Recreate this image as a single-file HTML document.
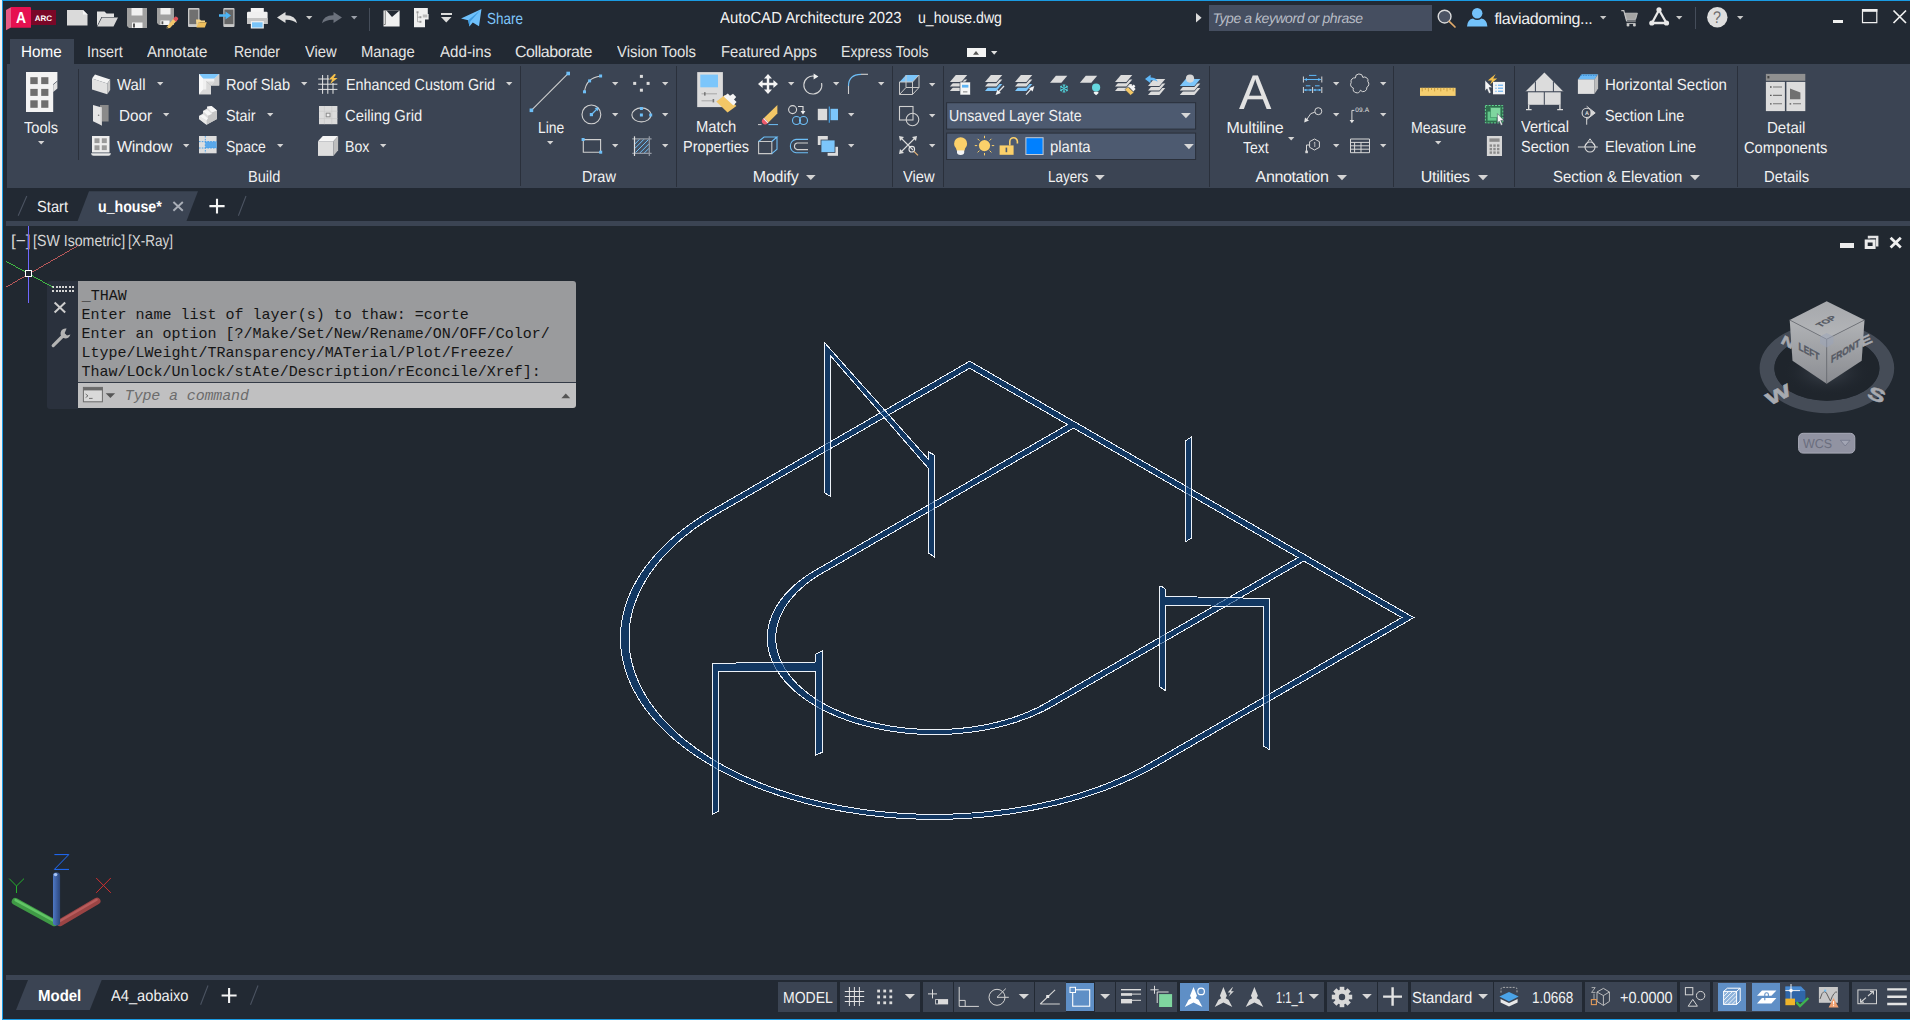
<!DOCTYPE html>
<html><head><meta charset="utf-8">
<style>
*{margin:0;padding:0;box-sizing:border-box}
html,body{width:1910px;height:1020px;overflow:hidden;background:#222933}
body{font-family:"Liberation Sans",sans-serif;color:#f0f0f0;position:relative;font-size:15px}
.a{position:absolute}
.t{position:absolute;white-space:nowrap;line-height:1;display:block}
svg{position:absolute;overflow:visible}
</style></head><body>
<!-- p_frame -->
<div class="a" style="left:0px;top:0px;width:2px;height:1020px;background:#f3f3f3;"></div>
<div class="a" style="left:2px;top:0px;width:1908px;height:1px;background:#1a9be3;"></div>
<div class="a" style="left:2px;top:0px;width:1px;height:1020px;background:#1a9be3;"></div>
<div class="a" style="left:2px;top:1019px;width:1908px;height:1px;background:#1a9be3;"></div>
<div class="a" style="left:7px;top:64px;width:1903px;height:124px;background:#3b4453;"></div>
<div class="a" style="left:10px;top:39px;width:64px;height:26px;background:#3b4453;"></div>
<div class="a" style="left:3px;top:226px;width:1907px;height:749px;background:#212830;"></div>
<div class="a" style="left:6px;top:221px;width:1904px;height:5px;background:#3b4453;"></div>
<div class="a" style="left:6px;top:975px;width:1904px;height:5px;background:#3b4453;"></div>
<!-- p_title -->
<svg style="left:0px;top:0px" width="60" height="36">
<path d="M6 10L11 7.3V27.6L6 30.3Z" fill="#e95a85"/>
<path d="M11 7.1H30Q31 7.1 31 8.1V27.8H11Z" fill="#e61150"/>
<rect x="31" y="10" width="25" height="15" fill="#7a0727"/></svg>
<span class="t" style="left:16.00px;top:11.00px;font-size:16px;color:#ffffff;letter-spacing:0.000px;font-weight:bold;text-rendering:geometricPrecision;transform-origin:0.00px 0;transform:scaleX(0.8696);">A</span>
<span class="t" style="left:34.70px;top:15.00px;font-size:8px;color:#ffffff;letter-spacing:0.062px;font-weight:bold;text-rendering:geometricPrecision;">ARC</span>
<svg style="left:66.5px;top:10.3px" width="21" height="16"><path d="M0 0H16L20.5 4.5V15.5H0Z" fill="#dadada"/><path d="M16 0L20.5 4.5H16Z" fill="#f6f6f6"/></svg>
<svg style="left:96.5px;top:9.5px" width="22" height="17"><path d="M0 1.5H7.5L9.5 3.5H17V7H4.5L0 16Z" fill="#e2e2e2"/><path d="M5 7.6H21L16.5 16.5H0.3Z" fill="#d6d6d6"/></svg>
<svg style="left:127px;top:8px" width="20" height="20"><path d="M0 0H20V20H2L0 18Z" fill="#a0a0a0"/><rect x="4.5" y="0" width="11" height="7.5" fill="#f0f0f0"/><rect x="5" y="14.5" width="10.5" height="5.5" fill="#f4f4f4"/><rect x="6" y="15.5" width="2" height="4" fill="#555"/></svg>
<svg style="left:157px;top:8px" width="21" height="20"><path d="M0 0H17V17H2L0 15Z" fill="#a0a0a0"/><rect x="3.5" y="0" width="10" height="6.5" fill="#f0f0f0"/><rect x="3.5" y="12.5" width="9" height="4.5" fill="#f4f4f4"/><rect x="4.5" y="13.3" width="1.8" height="3" fill="#555"/><path d="M10 18.5L17 10L20 12.5L13 20L9.6 20.6Z" fill="#f3c66b"/><path d="M16 11L18 8.8Q19 8 20 9L21 10Q21.6 11 20.8 11.8L19 13.8Z" fill="#e0535c"/><path d="M10 18.5L9.6 20.6L11.5 20.2Z" fill="#444"/></svg>
<svg style="left:187.6px;top:8px" width="19" height="20"><rect x="0" y="0" width="11.5" height="19" rx="1" fill="#c8c8c8"/><rect x="1.3" y="1.6" width="9" height="14.5" fill="#707070"/><path d="M8 11.5H12L13 12.5H17V14H10.5L8.5 19Z" fill="#f6d58a"/><path d="M10.8 14.3H18.8L16.8 19.5H8.4Z" fill="#efbf5c"/></svg>
<svg style="left:218.8px;top:8px" width="16" height="20"><rect x="4.3" y="0" width="11.2" height="19" rx="1" fill="#c8c8c8"/><rect x="5.4" y="1.6" width="9" height="14.5" fill="#666"/><path d="M0 6.3H6.5V3.5L12 7.5L6.5 11.5V8.7H0Z" fill="#4db5f5"/></svg>
<svg style="left:246.8px;top:7.5px" width="21" height="21"><rect x="3.8" y="0" width="13" height="6" fill="#f4f4f4"/><path d="M0 5Q0 3.8 1.2 3.8H19.4Q20.6 3.8 20.6 5V16H0Z" fill="#f0f0f0"/><rect x="0" y="10" width="20.6" height="6" fill="#c4c4c4"/><rect x="3.8" y="13.2" width="13" height="7.3" fill="#f4f4f4"/><rect x="5" y="14.3" width="10.6" height="5.2" fill="#79c4f8"/></svg>
<svg style="left:277px;top:12px" width="20" height="12"><path d="M0 5.5L8.5 0V3.3Q18.5 3.2 20 11.3Q15.5 7.3 8.5 7.7V11Z" fill="#dcdcdc"/></svg>
<svg style="left:305.8px;top:16px" width="6.4" height="3.6"><path d="M0 0H6.4L3.2 3.6Z" fill="#c8c8c8"/></svg>
<svg style="left:322px;top:12px" width="20" height="12"><path d="M20 5.5L11.5 0V3.3Q1.5 3.2 0 11.3Q4.5 7.3 11.5 7.7V11Z" fill="#6b717c"/></svg>
<svg style="left:350.8px;top:16px" width="6.4" height="3.6"><path d="M0 0H6.4L3.2 3.6Z" fill="#9a9fa8"/></svg>
<div class="a" style="left:369px;top:8px;width:1px;height:23px;background:#454d5a;"></div>
<svg style="left:383px;top:10px" width="17" height="17"><path d="M0.5 0.5H16.6V16.5H0.5Z" fill="#f0f0f0"/><path d="M3.4 0.5L9 7L16.6 0.5Z" fill="#222933"/><path d="M2.3 1V14.5H0.8" stroke="#555" stroke-width="0.7" fill="none"/></svg>
<svg style="left:413.5px;top:8px" width="15" height="19.5"><path d="M0 0H13.8V6H14.6V11.6H11V19.3H0Z" fill="#f0f0f0"/><rect x="2.5" y="3.3" width="2" height="2" fill="#999"/><rect x="5.4" y="8.2" width="2" height="2" fill="#999"/><rect x="5.4" y="12.8" width="2" height="2" fill="#999"/><rect x="8.8" y="6.5" width="4.5" height="3" fill="#bbb"/><path d="M3.5 5.3V13.8H5.4M3.5 9.2H5.4" stroke="#999" stroke-width="0.7" fill="none"/></svg>
<div class="a" style="left:440.5px;top:12.7px;width:11.2px;height:2px;background:#dcdcdc;"></div>
<svg style="left:440.85px;top:16.6px" width="10.5" height="5.4"><path d="M0 0H10.5L5.25 5.4Z" fill="#dcdcdc"/></svg>
<svg style="left:461px;top:8.6px" width="21" height="18"><path d="M0 9.5L20.5 0L18 17.2L11.8 13.6L8.4 17.6L7.2 11.3Z" fill="#6ec0fb"/><path d="M7.2 11.3L19.3 1.2L9.3 12.4L8.4 17.6Z" fill="#3d9be0"/></svg>
<span class="t" style="left:487.30px;top:12.00px;font-size:16px;color:#7fc6fb;letter-spacing:0.000px;text-rendering:geometricPrecision;transform-origin:0.00px 0;transform:scaleX(0.8421);">Share</span>
<span class="t" style="left:720.10px;top:11.00px;font-size:16px;color:#f4f4f4;letter-spacing:0.000px;text-rendering:geometricPrecision;transform-origin:0.00px 0;transform:scaleX(0.9273);">AutoCAD Architecture 2023</span>
<span class="t" style="left:918.30px;top:11.00px;font-size:16px;color:#f4f4f4;letter-spacing:0.000px;text-rendering:geometricPrecision;transform-origin:0.00px 0;transform:scaleX(0.8819);">u_house.dwg</span>
<svg style="left:1195.8px;top:13.4px" width="6" height="10"><path d="M0 0L5.6 4.7L0 9.4Z" fill="#dcdcdc"/></svg>
<div class="a" style="left:1209px;top:5px;width:223px;height:26px;background:#454e60;"></div>
<span class="t" style="left:1212.40px;top:11.00px;font-size:14px;color:#b9bdc6;letter-spacing:-0.438px;font-style:italic;text-rendering:geometricPrecision;">Type a keyword or phrase</span>
<svg style="left:1437px;top:9px" width="20" height="19"><circle cx="7.6" cy="7.6" r="6.4" fill="#4c5464" stroke="#dcdcdc" stroke-width="1.4"/><path d="M12.2 12.4L18 18" stroke="#e0aa6a" stroke-width="1.7" stroke-linecap="round"/></svg>
<svg style="left:1466.7px;top:8.4px" width="21" height="19"><circle cx="10.2" cy="5.2" r="5.2" fill="#73c2fb"/><path d="M0 18.4Q0.5 11.5 6 10.6Q10.2 13.6 14.4 10.6Q19.9 11.5 20.4 18.4Z" fill="#73c2fb"/></svg>
<span class="t" style="left:1494.50px;top:12.00px;font-size:16px;color:#f0f0f0;letter-spacing:-0.352px;text-rendering:geometricPrecision;">flaviadoming...</span>
<svg style="left:1599.8px;top:16px" width="6.4" height="3.6"><path d="M0 0H6.4L3.2 3.6Z" fill="#c8c8c8"/></svg>
<svg style="left:1620.5px;top:10px" width="18" height="17"><path d="M0.3 0.6H2.8L5.6 11H14.8" fill="none" stroke="#c4c4c4" stroke-width="1.2"/><path d="M3.8 3.2H16.4L14.6 9.4H5.4Z" fill="#a4a4a4" stroke="#c8c8c8" stroke-width="0.8"/><path d="M5.6 13.4H14.6" stroke="#c4c4c4" stroke-width="1"/><circle cx="7" cy="15" r="1.5" fill="#c8c8c8"/><circle cx="13.4" cy="15" r="1.5" fill="#c8c8c8"/></svg>
<svg style="left:1648.5px;top:7.3px" width="21" height="19"><path d="M10 3L3 16H17.5Z" fill="none" stroke="#e8e8e8" stroke-width="2.3" stroke-linejoin="round"/><circle cx="10" cy="2.8" r="2.6" fill="#e8e8e8"/><circle cx="2.8" cy="16" r="2.6" fill="#e8e8e8"/><circle cx="17.5" cy="16" r="2.6" fill="#e8e8e8"/></svg>
<svg style="left:1675.8px;top:16px" width="6.4" height="3.6"><path d="M0 0H6.4L3.2 3.6Z" fill="#c8c8c8"/></svg>
<div class="a" style="left:1695px;top:7px;width:1px;height:22px;background:#454d5a;"></div>
<svg style="left:1706.7px;top:7.4px" width="21" height="21"><circle cx="10.3" cy="10.2" r="10.2" fill="#dedede"/></svg>
<span class="t" style="left:1713.00px;top:9.00px;font-size:17px;color:#6e6e6e;letter-spacing:0.000px;text-rendering:geometricPrecision;transform-origin:0.00px 0;transform:scaleX(0.8421);">?</span>
<svg style="left:1736.8px;top:16px" width="6.4" height="3.6"><path d="M0 0H6.4L3.2 3.6Z" fill="#c8c8c8"/></svg>
<div class="a" style="left:1832.7px;top:19.7px;width:10.6px;height:3.4px;background:#f0f0f0;"></div>
<svg style="left:1862px;top:9px" width="15" height="14.2"><path d="M0.5 0.5H14.8V13.7H0.5Z" fill="none" stroke="#f0f0f0" stroke-width="1.2"/><rect x="0" y="0" width="15.3" height="2.8" fill="#f0f0f0"/></svg>
<svg style="left:1892.7px;top:9.8px" width="14" height="14"><path d="M0.5 0.5L13 13M13 0.5L0.5 13" stroke="#f0f0f0" stroke-width="1.7"/></svg>
<!-- p_menu -->
<span class="t" style="left:21.40px;top:45.00px;font-size:16px;color:#ffffff;letter-spacing:0.000px;text-rendering:geometricPrecision;transform-origin:0.00px 0;transform:scaleX(0.9525);">Home</span>
<span class="t" style="left:87.40px;top:45.00px;font-size:16px;color:#e4e4e4;letter-spacing:0.000px;text-rendering:geometricPrecision;transform-origin:0.00px 0;transform:scaleX(0.8925);">Insert</span>
<span class="t" style="left:147.40px;top:45.00px;font-size:16px;color:#e4e4e4;letter-spacing:0.000px;text-rendering:geometricPrecision;transform-origin:0.00px 0;transform:scaleX(0.9422);">Annotate</span>
<span class="t" style="left:233.70px;top:45.00px;font-size:16px;color:#e4e4e4;letter-spacing:0.000px;text-rendering:geometricPrecision;transform-origin:0.00px 0;transform:scaleX(0.8762);">Render</span>
<span class="t" style="left:305.00px;top:45.00px;font-size:16px;color:#e4e4e4;letter-spacing:0.000px;text-rendering:geometricPrecision;transform-origin:0.00px 0;transform:scaleX(0.9217);">View</span>
<span class="t" style="left:361.30px;top:45.00px;font-size:16px;color:#e4e4e4;letter-spacing:0.000px;text-rendering:geometricPrecision;transform-origin:0.00px 0;transform:scaleX(0.9279);">Manage</span>
<span class="t" style="left:439.70px;top:45.00px;font-size:16px;color:#e4e4e4;letter-spacing:0.000px;text-rendering:geometricPrecision;transform-origin:0.00px 0;transform:scaleX(0.9456);">Add-ins</span>
<span class="t" style="left:515.00px;top:45.00px;font-size:16px;color:#e4e4e4;letter-spacing:-0.438px;text-rendering:geometricPrecision;">Collaborate</span>
<span class="t" style="left:617.00px;top:45.00px;font-size:16px;color:#e4e4e4;letter-spacing:0.000px;text-rendering:geometricPrecision;transform-origin:0.00px 0;transform:scaleX(0.9322);">Vision Tools</span>
<span class="t" style="left:721.00px;top:45.00px;font-size:16px;color:#e4e4e4;letter-spacing:0.000px;text-rendering:geometricPrecision;transform-origin:0.00px 0;transform:scaleX(0.9220);">Featured Apps</span>
<span class="t" style="left:841.40px;top:45.00px;font-size:16px;color:#e4e4e4;letter-spacing:0.000px;text-rendering:geometricPrecision;transform-origin:0.00px 0;transform:scaleX(0.8826);">Express Tools</span>
<div class="a" style="left:967px;top:48px;width:19px;height:9px;background:#f4f4f4;"></div>
<svg style="left:973.4px;top:50.8px" width="6" height="3.8"><path d="M0 3.8L3 0L6 3.8Z" fill="#555"/></svg>
<svg style="left:990.8px;top:51.1px" width="6.4" height="3.7"><path d="M0 0H6.4L3.2 3.7Z" fill="#e0e0e0"/></svg>
<!-- p_ribbon1 -->
<svg style="left:25.9px;top:72px" width="32" height="40"><path d="M0 0H31.4V9L27.2 12.5V40H0Z" fill="#f3f3f3"/>
<path d="M27.2 12.5L31.4 9V16.5L27.2 20Z" fill="#e0e0e0"/><path d="M27.2 12.5L31.4 9" stroke="#3b4453" stroke-width="0.6"/>
<g fill="#6e6e6e"><rect x="4.3" y="5.2" width="7.4" height="6.9"/><rect x="15.2" y="5.2" width="7.2" height="6.9"/><rect x="4.3" y="16.9" width="7.4" height="7"/><rect x="15.2" y="16.9" width="7.2" height="7"/><rect x="4.3" y="28.3" width="7.4" height="7.5"/><rect x="15.2" y="28.3" width="7.2" height="7.5"/></g></svg>
<span class="t" style="left:24.40px;top:121.00px;font-size:16px;color:#f2f2f2;letter-spacing:0.000px;text-rendering:geometricPrecision;transform-origin:0.00px 0;transform:scaleX(0.9124);">Tools</span>
<svg style="left:38.2px;top:141.4px" width="6.4" height="3.6"><path d="M0 0H6.4L3.2 3.6Z" fill="#d4d4d4"/></svg>
<div class="a" style="left:78px;top:69px;width:1px;height:91px;background:#2a303b;"></div>
<svg style="left:91.8px;top:74px" width="19" height="21"><path d="M0 4.5L3 0.6L18.2 5.5L15.2 9.4Z" fill="#f4f4f4"/><path d="M0 4.5L15.2 9.4V20.2L0 15.5Z" fill="#e2e2e2"/><path d="M15.2 9.4L18.2 5.5V16L15.2 20.2Z" fill="#c9c9c9"/></svg>
<span class="t" style="left:117.00px;top:78.00px;font-size:16px;color:#f2f2f2;letter-spacing:0.000px;text-rendering:geometricPrecision;transform-origin:0.00px 0;transform:scaleX(0.9344);">Wall</span>
<svg style="left:157px;top:82.1px" width="6.4" height="3.6"><path d="M0 0H6.4L3.2 3.6Z" fill="#d4d4d4"/></svg>
<svg style="left:92.9px;top:104.8px" width="16" height="21"><rect x="7" y="0" width="8.6" height="16.5" fill="#8a8a8a"/><path d="M0 0L8.8 2.6V20.4L0 16.3Z" fill="#e6e6e6"/><path d="M7.6 2.3L8.8 2.6V20.4L7.6 19.9Z" fill="#cfcfcf"/><circle cx="5.6" cy="10.3" r="0.8" fill="#777"/></svg>
<span class="t" style="left:118.80px;top:109.00px;font-size:16px;color:#f2f2f2;letter-spacing:0.000px;text-rendering:geometricPrecision;transform-origin:0.00px 0;transform:scaleX(0.9531);">Door</span>
<svg style="left:163px;top:113.3px" width="6.4" height="3.6"><path d="M0 0H6.4L3.2 3.6Z" fill="#d4d4d4"/></svg>
<svg style="left:91px;top:136.1px" width="20" height="20"><rect x="1" y="0" width="17.5" height="16.5" fill="#ededed"/><g fill="#9a9a9a"><rect x="3.5" y="2.3" width="5" height="4.8"/><rect x="10.8" y="2.3" width="5" height="4.8"/><rect x="3.5" y="9.3" width="5" height="4.8"/><rect x="10.8" y="9.3" width="5" height="4.8"/></g><path d="M0 17.2H20Q19.6 19.8 17.5 19.8H2.5Q0.4 19.8 0 17.2Z" fill="#e8e8e8"/></svg>
<span class="t" style="left:117.00px;top:140.00px;font-size:16px;color:#f2f2f2;letter-spacing:-0.320px;text-rendering:geometricPrecision;">Window</span>
<svg style="left:183px;top:144.3px" width="6.4" height="3.6"><path d="M0 0H6.4L3.2 3.6Z" fill="#d4d4d4"/></svg>
<svg style="left:198.8px;top:74px" width="21" height="21"><path d="M0 0H20.2V11.5H12V20.2H0Z" fill="#ececec"/><path d="M0 0H20.2L15.3 4.8H4.2Z" fill="#7cc6fb"/><path d="M0 0L4.2 4.8V15.6L0 20.2Z" fill="#f8f8f8"/><path d="M4.2 4.8H15.3V7.4H7.3V15.6H4.2Z" fill="#f0f0f0"/><path d="M15.3 4.8L20.2 0V11.5H12L15.3 7.4Z" fill="#cfcfcf"/><path d="M7.3 7.4H15.3L12 11.5V20.2H0L4.2 15.6H7.3Z" fill="#d9d9d9"/><path d="M7.3 7.4L12 11.5" stroke="#bdbdbd" stroke-width="0.6"/></svg>
<span class="t" style="left:225.80px;top:78.00px;font-size:16px;color:#f2f2f2;letter-spacing:0.000px;text-rendering:geometricPrecision;transform-origin:0.00px 0;transform:scaleX(0.9110);">Roof Slab</span>
<svg style="left:301px;top:82.1px" width="6.4" height="3.6"><path d="M0 0H6.4L3.2 3.6Z" fill="#d4d4d4"/></svg>
<svg style="left:199px;top:106.3px" width="19" height="19"><path d="M0 10L4 7.5V5L8 2.5V0.6L12.5 0L18 4.6V13L7.5 18.8L0 13Z" fill="#dcdcdc"/><path d="M8 0.9L12.5 0L18 4.6L13 6.5Z" fill="#f6f6f6"/><path d="M4 5L8.5 4L13 8L9 9.7Z" fill="#f6f6f6"/><path d="M0 10L4.5 8.4L9 12.5L7.5 14.5Z" fill="#f6f6f6"/><path d="M7.5 14.5L9 12.5V9.7L13 8V6.5L18 4.6V13L7.5 18.8Z" fill="#c6c6c6"/><path d="M0 10L7.5 14.5V18.8L0 13Z" fill="#e8e8e8"/></svg>
<span class="t" style="left:226.30px;top:109.00px;font-size:16px;color:#f2f2f2;letter-spacing:0.000px;text-rendering:geometricPrecision;transform-origin:0.00px 0;transform:scaleX(0.9004);">Stair</span>
<svg style="left:267.1px;top:113.3px" width="6.4" height="3.6"><path d="M0 0H6.4L3.2 3.6Z" fill="#d4d4d4"/></svg>
<svg style="left:199px;top:136.1px" width="18" height="18"><rect x="0" y="0" width="17.6" height="17.3" fill="#dedede"/><rect x="6.3" y="5.6" width="11.3" height="6.4" fill="#5aa8ea"/><path d="M6.3 0V17.3M0 5.6H17.6M0 12H17.6" stroke="#3d9bea" stroke-width="0.9" stroke-dasharray="1.6 1.2" fill="none"/></svg>
<span class="t" style="left:226.30px;top:140.00px;font-size:16px;color:#f2f2f2;letter-spacing:0.000px;text-rendering:geometricPrecision;transform-origin:0.00px 0;transform:scaleX(0.8771);">Space</span>
<svg style="left:276.9px;top:144.3px" width="6.4" height="3.6"><path d="M0 0H6.4L3.2 3.6Z" fill="#d4d4d4"/></svg>
<svg style="left:317.9px;top:74.3px" width="20" height="20"><path d="M4.6 1V19.8M9.8 1V19.8M15 9V19.8M0.2 5H11M0.2 10.2H19.4M0.2 15.4H19.4" stroke="#e6e6e6" stroke-width="1" fill="none"/><path d="M16.2 0L10.8 5.6H14.2L12.2 10L19.6 4H15.6L18 0.6Z" fill="#f5c04a"/></svg>
<span class="t" style="left:345.70px;top:78.00px;font-size:16px;color:#f2f2f2;letter-spacing:0.000px;text-rendering:geometricPrecision;transform-origin:0.00px 0;transform:scaleX(0.8962);">Enhanced Custom Grid</span>
<svg style="left:506px;top:82.1px" width="6.4" height="3.6"><path d="M0 0H6.4L3.2 3.6Z" fill="#d4d4d4"/></svg>
<svg style="left:318.9px;top:105.8px" width="19" height="19"><rect x="0" y="0" width="18.4" height="18.2" fill="#dcdcdc"/><path d="M5.4 0V18.2M12.8 0V18.2M0 5.2H18.4M0 12.6H18.4" stroke="#cacaca" stroke-width="0.7"/><rect x="7.2" y="7.2" width="3.8" height="3.6" fill="#eee" stroke="#8c8c8c" stroke-width="1"/></svg>
<span class="t" style="left:345.40px;top:109.00px;font-size:16px;color:#f2f2f2;letter-spacing:0.000px;text-rendering:geometricPrecision;transform-origin:0.00px 0;transform:scaleX(0.9232);">Ceiling Grid</span>
<svg style="left:317.9px;top:136.1px" width="21" height="21"><path d="M0 5.2L4.8 0H20.1L15.4 5.2Z" fill="#f6f6f6"/><path d="M0 5.2H15.4V19.9H0Z" fill="#dedede"/><path d="M15.4 5.2L20.1 0V14.3L15.4 19.9Z" fill="#bebebe"/></svg>
<span class="t" style="left:344.70px;top:140.00px;font-size:16px;color:#f2f2f2;letter-spacing:0.000px;text-rendering:geometricPrecision;transform-origin:0.00px 0;transform:scaleX(0.8833);">Box</span>
<svg style="left:380.3px;top:144.3px" width="6.4" height="3.6"><path d="M0 0H6.4L3.2 3.6Z" fill="#d4d4d4"/></svg>
<span class="t" style="left:247.50px;top:170.00px;font-size:16px;color:#f2f2f2;letter-spacing:0.000px;text-rendering:geometricPrecision;transform-origin:0.00px 0;transform:scaleX(0.9123);">Build</span>
<div class="a" style="left:520px;top:66px;width:1px;height:120px;background:#2a303b;"></div>
<!-- p_ribbon2 -->
<svg style="left:0px;top:0px" width="1910" height="200"><path d="M531.6 110.2L568 73.7" stroke="#d0d0d0" stroke-width="1.1"/><rect x="529.6" y="108.5" width="3.6" height="3.6" fill="#6ebff7"/><rect x="566.4" y="71.7" width="3.6" height="3.6" fill="#6ebff7"/><path d="M584.5 91.8Q586 78 600.6 76" stroke="#d0d0d0" stroke-width="1.1" fill="none"/><rect x="583" y="90.3" width="3" height="3" fill="#6ebff7"/><rect x="588.1" y="79.4" width="3" height="3" fill="#6ebff7"/><rect x="599.1" y="74.5" width="3" height="3" fill="#6ebff7"/><rect x="639.9" y="74.9" width="3" height="3" fill="#dcdcdc"/><rect x="633.2" y="81.9" width="3" height="3" fill="#dcdcdc"/><rect x="646.6" y="81.9" width="3" height="3" fill="#dcdcdc"/><rect x="639.9" y="88.7" width="3" height="3" fill="#dcdcdc"/><circle cx="591.4" cy="114.4" r="9.4" fill="none" stroke="#d0d0d0" stroke-width="1.1"/><rect x="589.8" y="113" width="3.2" height="3.2" fill="#6ebff7"/><path d="M592.5 113.5L597.5 108.5" stroke="#6ebff7" stroke-width="1.2"/><path d="M594.6 108L598.4 107.4L597.8 111.2Z" fill="#6ebff7"/><ellipse cx="641.4" cy="114.9" rx="9.5" ry="7" fill="none" stroke="#d0d0d0" stroke-width="1.1"/><rect x="639.9" y="107" width="3" height="3" fill="#6ebff7"/><rect x="639.9" y="113.5" width="3" height="3" fill="#6ebff7"/><rect x="649.2" y="113.5" width="3" height="3" fill="#6ebff7"/><path d="M583.3 139.6H600.6V152.2H583.3Z" fill="none" stroke="#d0d0d0" stroke-width="1.1"/><rect x="581.6" y="138" width="3" height="3" fill="#6ebff7"/><rect x="599.2" y="150.7" width="3" height="3" fill="#6ebff7"/><rect x="634.8" y="139.2" width="14.3" height="13.8" fill="#465060"/><path d="M634.8 144L639.6 139.2M634.8 148.5L644 139.2M635.5 152.5L648.6 139.4M639.8 153L649.1 143.7M644.3 153L649.1 148.2" stroke="#6ebff7" stroke-width="1"/><path d="M649.3 136.3V156M632.2 138.8H651.6M632.2 153.3H651.6" stroke="#9399a3" stroke-width="1.2"/><path d="M634.5 136.3V156" stroke="#e0e0e0" stroke-width="1.2"/></svg>
<span class="t" style="left:537.70px;top:121.00px;font-size:16px;color:#f2f2f2;letter-spacing:0.000px;text-rendering:geometricPrecision;transform-origin:0.00px 0;transform:scaleX(0.8661);">Line</span>
<svg style="left:547.2px;top:141.3px" width="6.4" height="3.6"><path d="M0 0H6.4L3.2 3.6Z" fill="#d4d4d4"/></svg>
<svg style="left:612px;top:82.2px" width="6.4" height="3.6"><path d="M0 0H6.4L3.2 3.6Z" fill="#d4d4d4"/></svg>
<svg style="left:612px;top:113px" width="6.4" height="3.6"><path d="M0 0H6.4L3.2 3.6Z" fill="#d4d4d4"/></svg>
<svg style="left:612px;top:144.3px" width="6.4" height="3.6"><path d="M0 0H6.4L3.2 3.6Z" fill="#d4d4d4"/></svg>
<svg style="left:661.8px;top:82.2px" width="6.4" height="3.6"><path d="M0 0H6.4L3.2 3.6Z" fill="#d4d4d4"/></svg>
<svg style="left:661.8px;top:113px" width="6.4" height="3.6"><path d="M0 0H6.4L3.2 3.6Z" fill="#d4d4d4"/></svg>
<svg style="left:661.8px;top:144.3px" width="6.4" height="3.6"><path d="M0 0H6.4L3.2 3.6Z" fill="#d4d4d4"/></svg>
<span class="t" style="left:581.80px;top:170.00px;font-size:16px;color:#f2f2f2;letter-spacing:0.000px;text-rendering:geometricPrecision;transform-origin:0.00px 0;transform:scaleX(0.9070);">Draw</span>
<div class="a" style="left:676px;top:66px;width:1px;height:121px;background:#2a303b;"></div>
<svg style="left:0px;top:0px" width="1910" height="200"><rect x="697.2" y="72.1" width="25.7" height="35" fill="#dcdcdc"/><rect x="700.3" y="74.6" width="17.7" height="12.7" fill="#7cc6fb"/><path d="M701.5 93.8H717M701.5 100.8H714" stroke="#9a9a9a" stroke-width="0.8"/><rect x="704" y="92.2" width="1.6" height="3.4" fill="#777"/><rect x="712.6" y="99" width="1.6" height="3.4" fill="#777"/><path d="M716.3 101.4L725 95L736.4 106L727.5 112.4Z" fill="#f3c766"/><path d="M723.6 96.6L727.8 93.6L730 95.8L733 93.8L736.2 97L734 99.4L736.6 102L733.4 105.6Z" fill="#f4f4f4"/><path d="M768 73.9L772 78.6H769.2V82.8H773.4V80L778 84L773.4 88V85.2H769.2V89.4H772L768 94L764 89.4H766.8V85.2H762.6V88L758 84L762.6 80V82.8H766.8V78.6H764Z" fill="#f4f4f4"/><path d="M814.5 76.2A9 9 0 1 0 821.6 83" fill="none" stroke="#d6d6d6" stroke-width="1.1"/><path d="M813.6 73.6L818.4 76.6L813.6 79.4Z" fill="#f0f0f0"/><path d="M848.5 94V86" stroke="#d0d0d0" stroke-width="1.1" fill="none"/><path d="M848.5 86Q848.5 74.5 861 74.3" stroke="#6ebff7" stroke-width="1.2" fill="none"/><path d="M861 74.3H868" stroke="#d0d0d0" stroke-width="1.1"/><path d="M764 118L777.4 105V113.5L768.4 122.4Z" fill="#f3c766"/><path d="M764 118L768.4 122.4L766.8 124Q764.6 125.4 762.8 123.6Q761.2 121.6 762.4 119.6Z" fill="#ef5a6a"/><path d="M763.2 118.8L767.6 123.2L768.4 122.4L764 118Z" fill="#f4f4f4"/><path d="M758 124.6H761.5" stroke="#d0d0d0" stroke-width="1"/><path d="M768.5 124.6H778" stroke="#6ebff7" stroke-width="1"/><circle cx="792.6" cy="109.6" r="4" fill="none" stroke="#d6d6d6" stroke-width="1.1"/><path d="M798 106.5H803V112" stroke="#e0e0e0" stroke-width="1.1" fill="none"/><path d="M800.6 111L803 114.4L805.4 111Z" fill="#f0f0f0"/><circle cx="796.5" cy="120.5" r="4" fill="none" stroke="#6ebff7" stroke-width="1.1"/><circle cx="803.5" cy="120.5" r="4" fill="none" stroke="#6ebff7" stroke-width="1.1"/><rect x="817.8" y="108.8" width="9.4" height="11.4" fill="#dcdcdc"/><rect x="830.5" y="108.8" width="7.5" height="11.4" fill="#7cc6fb"/><path d="M829.3 106.4V122.7" stroke="#4aa8ee" stroke-width="1.1"/><path d="M758.6 141.5H771.8V153.6H758.6Z" fill="none" stroke="#c8c8c8" stroke-width="1.1"/><path d="M758.6 141.5L764 137H777L771.8 141.5M777 137V149.2L771.8 153.6" fill="none" stroke="#6ebff7" stroke-width="1.1"/><path d="M808 139.4H796A6.8 6.8 0 0 0 796 152.8H808" fill="none" stroke="#6ebff7" stroke-width="1.1"/><path d="M808 143H797A3.4 3.4 0 0 0 797 149.6H808" fill="none" stroke="#d0d0d0" stroke-width="1.1"/><rect x="817.8" y="136" width="10" height="9" fill="#dcdcdc"/><rect x="827.6" y="146.8" width="10.4" height="9" fill="#dcdcdc"/><rect x="821" y="140" width="14" height="12.5" fill="#7cc6fb" stroke="#3b4453" stroke-width="0.8"/></svg>
<span class="t" style="left:695.80px;top:120.00px;font-size:16px;color:#f2f2f2;letter-spacing:0.000px;text-rendering:geometricPrecision;transform-origin:0.00px 0;transform:scaleX(0.9215);">Match</span>
<span class="t" style="left:682.80px;top:140.00px;font-size:16px;color:#f2f2f2;letter-spacing:0.000px;text-rendering:geometricPrecision;transform-origin:0.00px 0;transform:scaleX(0.9057);">Properties</span>
<svg style="left:788px;top:82px" width="6.4" height="3.6"><path d="M0 0H6.4L3.2 3.6Z" fill="#d4d4d4"/></svg>
<svg style="left:832.9px;top:82px" width="6.4" height="3.6"><path d="M0 0H6.4L3.2 3.6Z" fill="#d4d4d4"/></svg>
<svg style="left:877.9px;top:82px" width="6.4" height="3.6"><path d="M0 0H6.4L3.2 3.6Z" fill="#d4d4d4"/></svg>
<svg style="left:848px;top:113px" width="6.4" height="3.6"><path d="M0 0H6.4L3.2 3.6Z" fill="#d4d4d4"/></svg>
<svg style="left:848px;top:144.2px" width="6.4" height="3.6"><path d="M0 0H6.4L3.2 3.6Z" fill="#d4d4d4"/></svg>
<span class="t" style="left:752.80px;top:170.00px;font-size:16px;color:#f2f2f2;letter-spacing:-0.245px;text-rendering:geometricPrecision;">Modify</span>
<svg style="left:806.4px;top:175.4px" width="9.6" height="5"><path d="M0 0H9.6L4.8 5Z" fill="#d4d4d4"/></svg>
<div class="a" style="left:892px;top:66px;width:1px;height:121px;background:#2a303b;"></div>
<svg style="left:0px;top:0px" width="1910" height="200"><path d="M899.5 82L906 75H919L912.5 82Z" fill="#7cc6fb"/><path d="M899.5 82H912.5V94.5H899.5ZM912.5 82L919 75V87.5L912.5 94.5M899.5 94.5L906 87.5H919M906 75V87.5" fill="none" stroke="#c8c8c8" stroke-width="1"/><rect x="899.5" y="106.5" width="13.5" height="13.5" fill="none" stroke="#d0d0d0" stroke-width="1.1"/><circle cx="912.5" cy="119.5" r="6.3" fill="none" stroke="#d0d0d0" stroke-width="1.1"/><path d="M900.5 137.5L913 150M915.5 137.5L900.5 152.5" stroke="#dcdcdc" stroke-width="1.1"/><path d="M899 136L904 137L900 141Z M917 136L912 137L916 141Z M899 154L900 149L904 153Z" fill="#dcdcdc"/><circle cx="911.8" cy="149.2" r="2.8" fill="none" stroke="#e4e4e4" stroke-width="1.1"/><path d="M914 151.4L918 155.4" stroke="#e8b678" stroke-width="1.3"/></svg>
<svg style="left:929px;top:83px" width="6.4" height="3.6"><path d="M0 0H6.4L3.2 3.6Z" fill="#d4d4d4"/></svg>
<svg style="left:929px;top:113.9px" width="6.4" height="3.6"><path d="M0 0H6.4L3.2 3.6Z" fill="#d4d4d4"/></svg>
<svg style="left:929px;top:144.2px" width="6.4" height="3.6"><path d="M0 0H6.4L3.2 3.6Z" fill="#d4d4d4"/></svg>
<span class="t" style="left:902.60px;top:170.00px;font-size:16px;color:#f2f2f2;letter-spacing:0.000px;text-rendering:geometricPrecision;transform-origin:0.00px 0;transform:scaleX(0.9188);">View</span>
<div class="a" style="left:943px;top:66px;width:1px;height:121px;background:#2a303b;"></div>
<!-- p_ribbon3 -->
<svg style="left:0px;top:0px" width="1910" height="200"><path d="M949.9 91L955.8 84H967.2L961.3 91Z" fill="#dcdcdc"/><path d="M949.9 87.7L955.8 80.7H967.2L961.3 87.7Z" fill="#3b4453"/><path d="M949.9 86.5L955.8 79.5H967.2L961.3 86.5Z" fill="#dcdcdc"/><path d="M949.9 83.2L955.8 76.2H967.2L961.3 83.2Z" fill="#3b4453"/><path d="M949.9 82L955.8 75H967.2L961.3 82Z" fill="#dcdcdc"/><rect x="960" y="82" width="10.4" height="13" fill="#f6f6f6" stroke="#3b4453" stroke-width="0.6"/><rect x="962" y="84.8" width="6.4" height="2.8" fill="#5fb4f4"/><rect x="963" y="91" width="4.4" height="1.6" fill="#aaa"/><path d="M985 91L990.9 84H1002.3L996.4 91Z" fill="#7cc6fb"/><path d="M985 87.7L990.9 80.7H1002.3L996.4 87.7Z" fill="#3b4453"/><path d="M985 86.5L990.9 79.5H1002.3L996.4 86.5Z" fill="#dcdcdc"/><path d="M985 83.2L990.9 76.2H1002.3L996.4 83.2Z" fill="#3b4453"/><path d="M985 82L990.9 75H1002.3L996.4 82Z" fill="#dcdcdc"/><path d="M1004 86L997 93.5" stroke="#e8e8e8" stroke-width="1.2"/><path d="M995.6 95L997.4 89.8L1000.8 93Z" fill="#f4f4f4"/><path d="M1015 91L1020.9 84H1032.3L1026.4 91Z" fill="#7cc6fb"/><path d="M1015 87.7L1020.9 80.7H1032.3L1026.4 87.7Z" fill="#3b4453"/><path d="M1015 86.5L1020.9 79.5H1032.3L1026.4 86.5Z" fill="#dcdcdc"/><path d="M1015 83.2L1020.9 76.2H1032.3L1026.4 83.2Z" fill="#3b4453"/><path d="M1015 82L1020.9 75H1032.3L1026.4 82Z" fill="#dcdcdc"/><path d="M1026 94.6L1032 88" stroke="#e8e8e8" stroke-width="1.2"/><path d="M1034.3 86L1032.6 91.6L1029 88.2Z" fill="#f4f4f4"/><path d="M1050 82.8L1055.9 75.8H1067.3L1061.4 82.8Z" fill="#dcdcdc"/><g stroke="#4fd0d8" stroke-width="1" fill="none"><path d="M1064 84V93M1060.1 86.2L1067.9 90.8M1060.1 90.8L1067.9 86.2"/><path d="M1062.6 85L1064 86.2L1065.4 85M1062.6 92L1064 90.8L1065.4 92M1060.2 88L1061.8 87.2L1061.4 85.6M1066.6 85.6L1066.2 87.2L1067.8 88M1060.2 89L1061.8 89.8L1061.4 91.4M1066.6 91.4L1066.2 89.8L1067.8 89"/></g><path d="M1079.9 82.8L1085.8 75.8H1097.2L1091.3 82.8Z" fill="#dcdcdc"/><circle cx="1096.1" cy="87.6" r="4.1" fill="#66d8e0"/><path d="M1093.8 91.8H1098.4V93.2L1096.1 95.2L1093.8 93.2Z" fill="#f4f4f4"/><path d="M1115 91L1120.9 84H1132.3L1126.4 91Z" fill="#dcdcdc"/><path d="M1115 87.7L1120.9 80.7H1132.3L1126.4 87.7Z" fill="#3b4453"/><path d="M1115 86.5L1120.9 79.5H1132.3L1126.4 86.5Z" fill="#dcdcdc"/><path d="M1115 83.2L1120.9 76.2H1132.3L1126.4 83.2Z" fill="#3b4453"/><path d="M1115 82L1120.9 75H1132.3L1126.4 82Z" fill="#dcdcdc"/><path d="M1124.8 89.6L1128 87L1134 92.6L1130.6 95.2Z" fill="#f3c766" stroke="#3b4453" stroke-width="0.5"/><path d="M1128.6 86.6L1131 84.6L1132.2 85.8L1133.8 84.6L1135.4 86.2L1134.2 87.6L1135.6 89L1133.4 91.4Z" fill="#f6f6f6"/><path d="M1148 94.9L1153.9 87.9H1165.3L1159.4 94.9Z" fill="#dcdcdc"/><path d="M1148 91.6L1153.9 84.6H1165.3L1159.4 91.6Z" fill="#3b4453"/><path d="M1148 90.4L1153.9 83.4H1165.3L1159.4 90.4Z" fill="#dcdcdc"/><path d="M1148 87.1L1153.9 80.1H1165.3L1159.4 87.1Z" fill="#3b4453"/><path d="M1148 85.9L1153.9 78.9H1165.3L1159.4 85.9Z" fill="#dcdcdc"/><path d="M1145 79L1150.6 74.8V77.4Q1156.4 77.4 1157.8 81.8Q1154.6 80 1150.6 80.4V83.2Z" fill="#5fb8f8"/><path d="M1179.8 94.9L1185.7 87.9H1200.3L1194.4 94.9Z" fill="#dcdcdc"/><path d="M1179.8 91.6L1185.7 84.6H1200.3L1194.4 91.6Z" fill="#3b4453"/><path d="M1179.8 90.4L1185.7 83.4H1200.3L1194.4 90.4Z" fill="#dcdcdc"/><path d="M1179.8 87.1L1185.7 80.1H1200.3L1194.4 87.1Z" fill="#3b4453"/><path d="M1179.8 85.9L1185.7 78.9H1200.3L1194.4 85.9Z" fill="#7cc6fb"/><circle cx="1190" cy="78.6" r="4.1" fill="#d8d8d8"/><rect x="946.6" y="102.7" width="249" height="26.4" fill="#4d5a70" stroke="#2a303b" stroke-width="1"/><rect x="946.6" y="133.1" width="249" height="26.4" fill="#4d5a70" stroke="#2a303b" stroke-width="1"/><circle cx="960.6" cy="143.7" r="6.5" fill="#fbd06a"/><path d="M957 149H964.2V152.6Q964.2 155 960.6 155Q957 155 957 152.6Z" fill="#f4f4f4"/><path d="M956.4 147.4H964.8V150.4H956.4Z" fill="#fbd06a"/><circle cx="984.5" cy="145.6" r="5.6" fill="#fbd06a"/><path d="M984.5 135.8V138.2M984.5 153V155.4M974.8 145.6H977.2M991.8 145.6H994.2M977.6 138.8L979.4 140.6M989.6 150.6L991.4 152.4M977.6 152.4L979.4 150.6M989.6 140.6L991.4 138.8" stroke="#fbd06a" stroke-width="1"/><rect x="999.6" y="145.4" width="14" height="9.4" fill="#fbd06a"/><path d="M1009.8 145.4V141.6A3.8 3.8 0 0 1 1017.4 141.6V143.6" fill="none" stroke="#fbd06a" stroke-width="1.6"/><rect x="1005.6" y="147.6" width="1.6" height="4.6" fill="#4d5a70"/><rect x="1025.9" y="137.7" width="17.2" height="16.8" fill="#0080ff" stroke="#c4cad4" stroke-width="1"/></svg>
<span class="t" style="left:949.40px;top:109.00px;font-size:16px;color:#f2f2f2;letter-spacing:0.000px;text-rendering:geometricPrecision;transform-origin:0.00px 0;transform:scaleX(0.8877);">Unsaved Layer State</span>
<svg style="left:1181.3px;top:112.9px" width="9.8" height="5.2"><path d="M0 0H9.8L4.9 5.2Z" fill="#d8d8d8"/></svg>
<span class="t" style="left:1049.70px;top:140.00px;font-size:16px;color:#f2f2f2;letter-spacing:0.000px;text-rendering:geometricPrecision;transform-origin:0.00px 0;transform:scaleX(0.9303);">planta</span>
<svg style="left:1184.1px;top:144.3px" width="9.8" height="5.2"><path d="M0 0H9.8L4.9 5.2Z" fill="#d8d8d8"/></svg>
<span class="t" style="left:1047.60px;top:170.00px;font-size:16px;color:#f2f2f2;letter-spacing:0.000px;text-rendering:geometricPrecision;transform-origin:0.00px 0;transform:scaleX(0.8396);">Layers</span>
<svg style="left:1094.9px;top:175.1px" width="9.8" height="5.1"><path d="M0 0H9.8L4.9 5.1Z" fill="#d4d4d4"/></svg>
<div class="a" style="left:1209px;top:66px;width:1px;height:121px;background:#2a303b;"></div>
<span class="t" style="left:1239.10px;top:69.00px;font-size:48.6px;color:#e2e2e2;letter-spacing:0.125px;text-rendering:geometricPrecision;">A</span>
<span class="t" style="left:1226.50px;top:121.00px;font-size:16px;color:#f2f2f2;letter-spacing:-0.206px;text-rendering:geometricPrecision;">Multiline</span>
<span class="t" style="left:1243.20px;top:141.00px;font-size:16px;color:#f2f2f2;letter-spacing:0.000px;text-rendering:geometricPrecision;transform-origin:0.00px 0;transform:scaleX(0.8749);">Text</span>
<svg style="left:1287.7px;top:137.1px" width="6.4" height="3.6"><path d="M0 0H6.4L3.2 3.6Z" fill="#d4d4d4"/></svg>
<svg style="left:0px;top:0px" width="1910" height="200"><path d="M1303.4 76.5V82.5M1321.8 76.5V82.5M1303.4 87V93M1312.6 87V93M1321.8 87V93" stroke="#d8d8d8" stroke-width="1"/><path d="M1304.4 79.5H1320.8M1309 75.4H1316.4M1304.4 90H1311.6M1313.6 90H1320.8M1305.8 85.8H1310.4M1315 85.8H1319.6" stroke="#5fb8f8" stroke-width="1"/><path d="M1304 79.5L1307 78V81ZM1321.2 79.5L1318.2 78V81ZM1304 90L1306.4 88.8V91.2ZM1312 90L1309.6 88.8V91.2ZM1313.2 90L1315.6 88.8V91.2ZM1321.2 90L1318.8 88.8V91.2Z" fill="#5fb8f8"/><path d="M1362.8 77.4A3.6 3.6 0 0 1 1367.9 81.6A3.6 3.6 0 0 1 1366.8 87.3A3.6 3.6 0 0 1 1360.4 90.2A3.6 3.6 0 0 1 1353.4 88.1A3.6 3.6 0 0 1 1351.2 82.6A3.6 3.6 0 0 1 1355.4 77.9A3.6 3.6 0 0 1 1362.8 77.4Z" fill="none" stroke="#d8d8d8" stroke-width="1"/><circle cx="1318.3" cy="111.2" r="3.5" fill="none" stroke="#d8d8d8" stroke-width="1"/><path d="M1314.8 112.2L1310.8 113.6L1306.4 120" stroke="#d8d8d8" stroke-width="1" fill="none"/><path d="M1304.2 122.4L1305 117.6L1309 120.4Z" fill="#e4e4e4"/><path d="M1354.4 110.4H1351.9V120.5" stroke="#d8d8d8" stroke-width="1" fill="none"/><path d="M1349.6 120L1351.9 123.2L1354.2 120Z" fill="#e4e4e4"/><path d="M1314.5 139L1319.4 141.7V147.3L1314.5 150L1309.6 147.3V141.7Z" fill="none" stroke="#d8d8d8" stroke-width="1"/><path d="M1309.6 145H1306.5V151" stroke="#d8d8d8" stroke-width="1" fill="none"/><rect x="1305.3" y="150.6" width="2.6" height="2.6" fill="#d8d8d8"/><path d="M1313.8 143L1314.8 142.2V147" stroke="#d8d8d8" stroke-width="0.8" fill="none"/><path d="M1350.5 139H1369.5V152.7H1350.5ZM1350.5 142.4H1369.5M1350.5 145.8H1369.5M1350.5 149.2H1369.5M1354.6 142.4V152.7M1361 142.4V152.7" fill="none" stroke="#d8d8d8" stroke-width="1"/></svg>
<span class="t" style="left:1355.20px;top:108.00px;font-size:6.5px;color:#e0e0e0;letter-spacing:0.208px;text-rendering:geometricPrecision;">09.A</span>
<svg style="left:1332.8px;top:82.2px" width="6.4" height="3.6"><path d="M0 0H6.4L3.2 3.6Z" fill="#d4d4d4"/></svg>
<svg style="left:1379.7px;top:82.2px" width="6.4" height="3.6"><path d="M0 0H6.4L3.2 3.6Z" fill="#d4d4d4"/></svg>
<svg style="left:1332.8px;top:113px" width="6.4" height="3.6"><path d="M0 0H6.4L3.2 3.6Z" fill="#d4d4d4"/></svg>
<svg style="left:1379.7px;top:113px" width="6.4" height="3.6"><path d="M0 0H6.4L3.2 3.6Z" fill="#d4d4d4"/></svg>
<svg style="left:1332.8px;top:144.3px" width="6.4" height="3.6"><path d="M0 0H6.4L3.2 3.6Z" fill="#d4d4d4"/></svg>
<svg style="left:1379.7px;top:144.3px" width="6.4" height="3.6"><path d="M0 0H6.4L3.2 3.6Z" fill="#d4d4d4"/></svg>
<span class="t" style="left:1255.60px;top:170.00px;font-size:16px;color:#f2f2f2;letter-spacing:-0.367px;text-rendering:geometricPrecision;">Annotation</span>
<svg style="left:1336.9px;top:174.9px" width="10" height="5.2"><path d="M0 0H10L5 5.2Z" fill="#d4d4d4"/></svg>
<div class="a" style="left:1393px;top:66px;width:1px;height:121px;background:#2a303b;"></div>
<!-- p_ribbon4 -->
<svg style="left:0px;top:0px" width="1910" height="200"><rect x="1420" y="87.8" width="35.6" height="8.1" fill="#f6cf70"/><path d="M1422.2 87.8V91.4M1425.3 87.8V90M1428.4 87.8V91.4M1431.5 87.8V90M1434.6 87.8V91.4M1437.7 87.8V90M1440.8 87.8V91.4M1443.9 87.8V90M1447 87.8V91.4M1450.1 87.8V90M1453.2 87.8V91.4" stroke="#c79a3a" stroke-width="0.9"/><path d="M1495.6 73.9L1487.8 80.4H1492L1490 84.6L1497.2 78.6H1493.2Z" fill="#f5c04a"/><rect x="1493" y="81.9" width="12" height="12.4" fill="#f4f4f4"/><path d="M1498 85.2H1503M1498 88.2H1503M1498 91.2H1503" stroke="#4aa3f0" stroke-width="1"/><path d="M1495.4 85.2H1496.6M1495.4 88.2H1496.6M1495.4 91.2H1496.6" stroke="#4aa3f0" stroke-width="1.1"/><path d="M1485 80.2L1492.4 87.6H1489L1491 92.6L1489 93.6L1487 88.8L1485 91Z" fill="#f6f6f6" stroke="#3b4453" stroke-width="0.5"/><rect x="1485.4" y="105.5" width="17.4" height="17.4" fill="#2f6f4e" stroke="#62d58e" stroke-width="1" stroke-dasharray="2 1.2"/><rect x="1487.6" y="111.6" width="9" height="9" fill="#62c78a"/><rect x="1490.6" y="107.6" width="10" height="10" fill="#7fd69f" stroke="#3d8f63" stroke-width="0.6"/><path d="M1497.4 113.6L1504 120.4H1500.8L1502.6 124.6L1501 125.4L1499.2 121.2L1497.4 123Z" fill="#f6f6f6" stroke="#3b4453" stroke-width="0.5"/><rect x="1486.9" y="136" width="15.1" height="20" fill="#d6d6d6"/><rect x="1489.4" y="138.4" width="10.2" height="3.4" fill="#8a8a8a"/><g fill="#8a8a8a"><rect x="1489.6" y="144.4" width="2.4" height="2.4"/><rect x="1493.3" y="144.4" width="2.4" height="2.4"/><rect x="1497" y="144.4" width="2.4" height="2.4"/><rect x="1489.6" y="147.9" width="2.4" height="2.4"/><rect x="1493.3" y="147.9" width="2.4" height="2.4"/><rect x="1497" y="147.9" width="2.4" height="2.4"/><rect x="1489.6" y="151.4" width="2.4" height="2.4"/><rect x="1493.3" y="151.4" width="2.4" height="2.4"/><rect x="1497" y="151.4" width="2.4" height="2.4"/></g></svg>
<span class="t" style="left:1410.50px;top:121.00px;font-size:16px;color:#f2f2f2;letter-spacing:0.000px;text-rendering:geometricPrecision;transform-origin:0.00px 0;transform:scaleX(0.8867);">Measure</span>
<svg style="left:1434.9px;top:141.2px" width="6.4" height="3.6"><path d="M0 0H6.4L3.2 3.6Z" fill="#d4d4d4"/></svg>
<span class="t" style="left:1420.70px;top:170.00px;font-size:16px;color:#f2f2f2;letter-spacing:-0.278px;text-rendering:geometricPrecision;">Utilities</span>
<svg style="left:1478.1px;top:174.9px" width="10" height="5.2"><path d="M0 0H10L5 5.2Z" fill="#d4d4d4"/></svg>
<div class="a" style="left:1514px;top:66px;width:1px;height:121px;background:#2a303b;"></div>
<svg style="left:0px;top:0px" width="1910" height="200"><path d="M1544.4 72.4L1563.6 91.8H1525.3Z" fill="#dcdcdc"/><rect x="1527.9" y="91.8" width="32.8" height="13" fill="#dcdcdc"/><path d="M1535.4 81.5V91.8M1553.4 81.5V91.8M1525.3 91.8H1563.6M1544.3 92V104.8" stroke="#3b4453" stroke-width="1"/><path d="M1528.7 104.8V109.6M1559.9 104.8V109.6" stroke="#dcdcdc" stroke-width="1.4"/><path d="M1526 109.6H1531.6M1557.2 109.6H1563" stroke="#dcdcdc" stroke-width="1.2"/><path d="M1577.9 79.4L1581.6 74.2H1598.1L1594.4 79.4Z" fill="#6ab8f4"/><path d="M1580.4 75.4H1597" stroke="#2f7fc8" stroke-width="0.8" stroke-dasharray="1.5 1"/><rect x="1577.9" y="79.4" width="16.5" height="14.5" fill="#e0e0e0"/><path d="M1594.4 79.4L1598.1 74.2V88.6L1594.4 93.9Z" fill="#bdbdbd"/><circle cx="1586.7" cy="112.9" r="4.6" fill="none" stroke="#d8d8d8" stroke-width="1.1"/><path d="M1586.7 106.3L1595.2 112.9L1586.7 119.5" fill="none" stroke="#d8d8d8" stroke-width="1"/><path d="M1590.6 109.6L1595.2 112.9L1590.6 116.4Z" fill="#d8d8d8"/><path d="M1586.7 117.5V124.7" stroke="#d8d8d8" stroke-width="1"/><path d="M1577.9 147H1597.8" stroke="#d8d8d8" stroke-width="1"/><circle cx="1590" cy="147" r="5" fill="none" stroke="#d8d8d8" stroke-width="1.1"/><path d="M1584.6 146.6L1590 138.8L1595.4 146.6" fill="none" stroke="#d8d8d8" stroke-width="1"/></svg>
<span class="t" style="left:1584.90px;top:112.00px;font-size:5.5px;color:#e0e0e0;letter-spacing:-0.400px;font-weight:bold;text-rendering:geometricPrecision;">A</span>
<span class="t" style="left:1520.50px;top:120.00px;font-size:16px;color:#f2f2f2;letter-spacing:0.000px;text-rendering:geometricPrecision;transform-origin:0.00px 0;transform:scaleX(0.9124);">Vertical</span>
<span class="t" style="left:1520.50px;top:140.00px;font-size:16px;color:#f2f2f2;letter-spacing:0.000px;text-rendering:geometricPrecision;transform-origin:0.00px 0;transform:scaleX(0.9068);">Section</span>
<span class="t" style="left:1604.90px;top:78.00px;font-size:16px;color:#f2f2f2;letter-spacing:0.000px;text-rendering:geometricPrecision;transform-origin:0.00px 0;transform:scaleX(0.9386);">Horizontal Section</span>
<span class="t" style="left:1605.40px;top:109.00px;font-size:16px;color:#f2f2f2;letter-spacing:0.000px;text-rendering:geometricPrecision;transform-origin:0.00px 0;transform:scaleX(0.8987);">Section Line</span>
<span class="t" style="left:1605.40px;top:140.00px;font-size:16px;color:#f2f2f2;letter-spacing:0.000px;text-rendering:geometricPrecision;transform-origin:0.00px 0;transform:scaleX(0.9065);">Elevation Line</span>
<span class="t" style="left:1552.50px;top:170.00px;font-size:16px;color:#f2f2f2;letter-spacing:0.000px;text-rendering:geometricPrecision;transform-origin:0.00px 0;transform:scaleX(0.9326);">Section &amp; Elevation</span>
<svg style="left:1689.9px;top:174.9px" width="10" height="5.2"><path d="M0 0H10L5 5.2Z" fill="#d4d4d4"/></svg>
<div class="a" style="left:1737px;top:66px;width:1px;height:121px;background:#2a303b;"></div>
<svg style="left:0px;top:0px" width="1910" height="200"><rect x="1765.9" y="73.9" width="39.4" height="6.9" fill="#909090"/><rect x="1767.4" y="76" width="2" height="2.4" fill="#444"/><rect x="1765.9" y="81.9" width="19" height="29.2" fill="#dcdcdc"/><rect x="1786.4" y="81.9" width="18.9" height="29.2" fill="#dcdcdc"/><path d="M1773 87H1782M1773 95.4H1782M1773 103.8H1782M1793 103.8H1801" stroke="#777" stroke-width="1.1"/><path d="M1770 87H1771.6M1770 95.4H1771.6M1770 103.8H1771.6M1789.6 103.8H1791.2" stroke="#555" stroke-width="1.3"/><path d="M1790 88.6L1800.4 92.6V99.2H1790Z" fill="#707070"/></svg>
<span class="t" style="left:1766.90px;top:121.00px;font-size:16px;color:#f2f2f2;letter-spacing:0.000px;text-rendering:geometricPrecision;transform-origin:0.00px 0;transform:scaleX(0.9394);">Detail</span>
<span class="t" style="left:1744.30px;top:141.00px;font-size:16px;color:#f2f2f2;letter-spacing:0.000px;text-rendering:geometricPrecision;transform-origin:0.00px 0;transform:scaleX(0.9190);">Components</span>
<span class="t" style="left:1763.60px;top:170.00px;font-size:16px;color:#f2f2f2;letter-spacing:0.000px;text-rendering:geometricPrecision;transform-origin:0.00px 0;transform:scaleX(0.9248);">Details</span>
<!-- p_tabs -->
<svg style="left:0px;top:0px" width="400" height="230"><path d="M89 191.3H198L186.5 221H77.6Z" fill="#3b4453"/><path d="M18.2 215.8L26.8 196M238.4 215.8L246 196" stroke="#4b5361" stroke-width="1.1"/><path d="M173.4 202L182.8 210.8M182.8 202L173.4 210.8" stroke="#a9aeb7" stroke-width="1.9"/><path d="M209.4 206.1H224.6M217 198.8V213.4" stroke="#f4f4f4" stroke-width="2.1"/></svg>
<span class="t" style="left:37.00px;top:200.00px;font-size:16px;color:#f0f0f0;letter-spacing:0.000px;text-rendering:geometricPrecision;transform-origin:0.00px 0;transform:scaleX(0.9185);">Start</span>
<span class="t" style="left:98.30px;top:200.00px;font-size:16px;color:#ffffff;letter-spacing:0.000px;font-weight:bold;text-rendering:geometricPrecision;transform-origin:0.00px 0;transform:scaleX(0.8847);">u_house*</span>
<!-- p_draw -->
<svg style="left:0px;top:0px" width="1910" height="1020"><g fill="rgba(10,64,128,0.62)" stroke="#edf2f8" stroke-width="1" fill-rule="evenodd" shape-rendering="crispEdges"><path d="M969.7 361.2L712.4 509.8L704.7 514.4L697.4 519.1L690.4 523.9L683.6 528.9L677.2 534.0L671.0 539.3L665.2 544.6L659.8 550.1L654.6 555.7L649.8 561.4L645.3 567.2L641.2 573.0L637.5 579.0L634.1 585.0L631.1 591.1L628.4 597.2L626.2 603.4L624.3 609.6L622.7 615.9L621.6 622.2L620.8 628.5L620.4 634.8L620.4 641.2L620.8 647.5L621.6 653.8L622.7 660.1L624.3 666.4L626.2 672.6L628.4 678.8L631.1 684.9L634.1 691.0L637.5 697.0L641.2 703.0L645.3 708.8L649.8 714.6L654.6 720.3L659.8 725.9L665.2 731.4L671.0 736.7L677.2 742.0L683.6 747.1L690.4 752.1L697.4 756.9L704.7 761.6L712.4 766.2L720.2 770.6L728.4 774.8L736.8 778.9L745.4 782.8L754.3 786.5L763.4 790.1L772.7 793.4L782.2 796.6L791.8 799.5L801.7 802.3L811.7 804.9L821.9 807.3L832.2 809.4L842.6 811.4L853.1 813.1L863.8 814.7L874.5 816.0L885.3 817.1L896.1 818.0L907.0 818.6L918.0 819.1L928.9 819.3L939.9 819.3L950.8 819.1L961.8 818.6L972.7 818.0L983.5 817.1L994.3 816.0L1005.0 814.7L1015.7 813.1L1026.2 811.4L1036.6 809.4L1046.9 807.3L1057.1 804.9L1067.1 802.3L1077.0 799.5L1086.6 796.6L1096.1 793.4L1105.4 790.1L1114.5 786.5L1123.4 782.8L1132.0 778.9L1140.4 774.8L1148.6 770.6L1156.4 766.2L1413.8 617.6ZM1073.6 428.1L822.3 573.2L818.4 575.5L814.7 577.9L811.1 580.4L807.7 582.9L804.5 585.5L801.4 588.1L798.5 590.8L795.7 593.6L793.1 596.4L790.7 599.3L788.4 602.2L786.3 605.2L784.4 608.2L782.7 611.2L781.2 614.3L779.9 617.4L778.7 620.5L777.8 623.7L777.0 626.8L776.4 630.0L776.0 633.2L775.8 636.4L775.8 639.6L776.0 642.8L776.4 646.0L777.0 649.2L777.8 652.3L778.7 655.5L779.9 658.6L781.2 661.7L782.7 664.8L784.4 667.8L786.3 670.8L788.4 673.8L790.7 676.7L793.1 679.6L795.7 682.4L798.5 685.2L801.4 687.9L804.5 690.5L807.7 693.1L811.1 695.6L814.7 698.1L818.4 700.5L822.3 702.8L826.2 705.0L830.3 707.1L834.6 709.2L839.0 711.1L843.4 713.0L848.0 714.8L852.7 716.5L857.5 718.1L862.4 719.6L867.4 721.0L872.4 722.3L877.6 723.5L882.8 724.6L888.0 725.6L893.4 726.5L898.7 727.2L904.1 727.9L909.6 728.4L915.1 728.9L920.6 729.2L926.1 729.4L931.6 729.6L937.2 729.6L942.7 729.4L948.2 729.2L953.7 728.9L959.2 728.4L964.7 727.9L970.1 727.2L975.4 726.5L980.8 725.6L986.0 724.6L991.2 723.5L996.4 722.3L1001.4 721.0L1006.4 719.6L1011.3 718.1L1016.1 716.5L1020.8 714.8L1025.4 713.0L1029.8 711.1L1034.2 709.2L1038.5 707.1L1042.6 705.0L1046.5 702.8L1297.9 557.6ZM969.7 368.2L718.4 513.3L711.0 517.7L703.9 522.3L697.0 527.0L690.5 531.9L684.2 536.8L678.2 542.0L672.6 547.2L667.3 552.5L662.2 557.9L657.6 563.5L653.2 569.1L649.2 574.8L645.6 580.6L642.3 586.4L639.4 592.4L636.8 598.3L634.6 604.4L632.7 610.4L631.2 616.5L630.1 622.6L629.4 628.8L629.0 634.9L629.0 641.1L629.4 647.2L630.1 653.4L631.2 659.5L632.7 665.6L634.6 671.6L636.8 677.7L639.4 683.6L642.3 689.6L645.6 695.4L649.2 701.2L653.2 706.9L657.6 712.5L662.2 718.1L667.3 723.5L672.6 728.8L678.2 734.0L684.2 739.2L690.5 744.1L697.0 749.0L703.9 753.7L711.0 758.3L718.4 762.7L726.1 767.0L734.0 771.1L742.2 775.1L750.6 778.8L759.2 782.5L768.0 785.9L777.1 789.2L786.3 792.2L795.7 795.1L805.3 797.8L815.1 800.3L824.9 802.6L835.0 804.7L845.1 806.6L855.3 808.3L865.7 809.8L876.1 811.1L886.6 812.2L897.2 813.0L907.8 813.7L918.4 814.1L929.1 814.3L939.7 814.3L950.4 814.1L961.0 813.7L971.6 813.0L982.2 812.2L992.7 811.1L1003.1 809.8L1013.5 808.3L1023.7 806.6L1033.8 804.7L1043.9 802.6L1053.7 800.3L1063.5 797.8L1073.1 795.1L1082.5 792.2L1091.7 789.2L1100.8 785.9L1109.6 782.5L1118.2 778.8L1126.6 775.1L1134.8 771.1L1142.7 767.0L1150.4 762.7L1401.7 617.6L1303.9 561.1L1052.6 706.2L1048.4 708.6L1044.1 710.8L1039.6 713.0L1035.0 715.1L1030.3 717.1L1025.4 718.9L1020.5 720.7L1015.4 722.4L1010.3 724.0L1005.1 725.5L999.7 726.8L994.3 728.1L988.8 729.3L983.3 730.3L977.7 731.2L972.0 732.0L966.3 732.7L960.6 733.3L954.8 733.8L949.0 734.2L943.1 734.4L937.3 734.5L931.5 734.5L925.7 734.4L919.8 734.2L914.0 733.8L908.2 733.3L902.5 732.7L896.8 732.0L891.1 731.2L885.5 730.3L880.0 729.3L874.5 728.1L869.1 726.8L863.7 725.5L858.5 724.0L853.4 722.4L848.3 720.7L843.4 718.9L838.5 717.1L833.8 715.1L829.2 713.0L824.7 710.8L820.4 708.6L816.2 706.2L812.1 703.8L808.2 701.3L804.5 698.7L800.9 696.1L797.5 693.4L794.2 690.6L791.1 687.7L788.2 684.8L785.4 681.8L782.9 678.8L780.5 675.7L778.3 672.6L776.3 669.4L774.5 666.2L772.9 663.0L771.5 659.7L770.3 656.4L769.3 653.1L768.5 649.8L767.9 646.4L767.5 643.1L767.3 639.7L767.3 636.3L767.5 632.9L767.9 629.6L768.5 626.2L769.3 622.9L770.3 619.6L771.5 616.3L772.9 613.0L774.5 609.8L776.3 606.6L778.3 603.4L780.5 600.3L782.9 597.2L785.4 594.2L788.2 591.2L791.1 588.3L794.2 585.4L797.5 582.6L800.9 579.9L804.5 577.3L808.2 574.7L812.1 572.2L816.2 569.8L1067.5 424.6Z"/><path d="M824.2 342.2L928.5 459.4L928.5 451.9L934.6 455.2L934.6 557.0L928.5 553.0L928.5 468.5L830.6 355.9L830.6 496.6L824.2 492.4Z"/><path d="M1185.7 440.7L1191.0 437.3L1191.0 538.3L1185.7 541.7Z"/><path d="M1159.5 586.4L1161.7 586.4L1165.5 589.3L1165.5 596.3L1269.9 598.6L1269.9 750.0L1263.6 746.0L1263.6 606.7L1165.5 605.4L1165.5 690.7L1159.5 686.7Z"/><path d="M712.5 663.3L815.4 662.0L815.4 654.5L822.0 651.2L822.0 752.3L815.4 755.4L815.4 671.7L718.2 671.7L718.2 811.3L712.5 814.5Z"/></g></svg>
<!-- p_cmd -->
<div class="a" style="left:47.1px;top:280.6px;width:31px;height:128px;background:#2a313d;border-radius:4px 0 0 3px"></div>
<div class="a" style="left:78px;top:281px;width:498.4px;height:101px;background:#9a9b9d;border-radius:0 3px 0 0"></div>
<div class="a" style="left:78px;top:382px;width:498.4px;height:1px;background:#333a46;"></div>
<div class="a" style="left:78px;top:383px;width:498.4px;height:24.6px;background:#c0c0c1;border-radius:0 0 3px 0"></div>
<svg style="left:0px;top:0px" width="600" height="420"><g fill="#d4d4d4" shape-rendering="crispEdges"><rect x="52" y="286" width="2" height="2"/><rect x="56" y="286" width="2" height="2"/><rect x="59" y="286" width="2" height="2"/><rect x="62" y="286" width="2" height="2"/><rect x="65" y="286" width="2" height="2"/><rect x="69" y="286" width="2" height="2"/><rect x="72" y="286" width="2" height="2"/><rect x="52" y="290" width="2" height="2"/><rect x="56" y="290" width="2" height="2"/><rect x="59" y="290" width="2" height="2"/><rect x="62" y="290" width="2" height="2"/><rect x="65" y="290" width="2" height="2"/><rect x="69" y="290" width="2" height="2"/><rect x="72" y="290" width="2" height="2"/></g><path d="M54.6 302.4L65.2 312.4M65.2 302.4L54.6 312.4" stroke="#cdcdcd" stroke-width="2"/><path d="M53.2 345.6L63.8 335" stroke="#b4b4b4" stroke-width="3.2" stroke-linecap="round"/><path d="M66.6 328.6A5 5 0 1 0 70.4 334.6L67 335.6L64.6 333.2Z" fill="#b4b4b4"/><rect x="83.4" y="387.4" width="19" height="14.4" fill="#d9d9d9" stroke="#6a6a6a" stroke-width="1"/><rect x="83.4" y="387.4" width="19" height="3" fill="#6a6a6a"/><path d="M85.6 394L88 395.8L85.6 397.6M89 398.4H92.6" fill="none" stroke="#555" stroke-width="0.8"/><path d="M105.7 393.2H115.1L110.4 397.9Z" fill="#555"/><path d="M561.4 398.2H570.2L565.8 393.4Z" fill="#555"/></svg>
<span class="t" style="left:81.72px;top:289.00px;font-size:15px;color:#151515;letter-spacing:0.000px;font-family:'Liberation Mono',monospace;">_THAW</span>
<span class="t" style="left:81.60px;top:308.00px;font-size:15px;color:#151515;letter-spacing:0.000px;font-family:'Liberation Mono',monospace;">Enter name list of layer(s) to thaw: =corte</span>
<span class="t" style="left:81.60px;top:327.00px;font-size:15px;color:#151515;letter-spacing:0.000px;font-family:'Liberation Mono',monospace;">Enter an option [?/Make/Set/New/Rename/ON/OFF/Color/</span>
<span class="t" style="left:81.60px;top:346.00px;font-size:15px;color:#151515;letter-spacing:0.000px;font-family:'Liberation Mono',monospace;">Ltype/LWeight/TRansparency/MATerial/Plot/Freeze/</span>
<span class="t" style="left:81.60px;top:365.00px;font-size:15px;color:#151515;letter-spacing:0.000px;font-family:'Liberation Mono',monospace;">Thaw/LOck/Unlock/stAte/Description/rEconcile/Xref]:</span>
<span class="t" style="left:124.80px;top:389.00px;font-size:15px;color:#6c6c6c;letter-spacing:-0.146px;font-style:italic;font-family:'Liberation Mono',monospace;">Type a command</span>
<!-- p_vp -->
<span class="t" style="left:10.80px;top:234.00px;font-size:16px;color:#d6d6d6;letter-spacing:0.000px;text-rendering:geometricPrecision;transform-origin:0.00px 0;transform:scaleX(1.0740);">[−]</span>
<span class="t" style="left:33.00px;top:234.00px;font-size:16px;color:#d6d6d6;letter-spacing:0.000px;text-rendering:geometricPrecision;transform-origin:0.00px 0;transform:scaleX(0.8856);">[SW Isometric]</span>
<span class="t" style="left:128.30px;top:234.00px;font-size:16px;color:#d6d6d6;letter-spacing:0.000px;text-rendering:geometricPrecision;transform-origin:0.00px 0;transform:scaleX(0.8431);">[X-Ray]</span>
<svg style="left:0px;top:0px" width="1910" height="1020"><g shape-rendering="crispEdges"><path d="M6 287.2L79 245.1" stroke="#e06464" stroke-width="0.8"/><path d="M6 261.2L53.4 287.6" stroke="#48dc48" stroke-width="0.8"/><path d="M28.5 226V303" stroke="#7068ff" stroke-width="1"/></g><rect x="25.5" y="270.5" width="6" height="6" fill="#212830" stroke="#ffffff" stroke-width="1" shape-rendering="crispEdges"/><rect x="1839.6" y="243.2" width="14.3" height="4.8" fill="#ececec" shape-rendering="crispEdges"/><path d="M1869 238.6V237H1877.2V245.4H1876" fill="none" stroke="#e4e4e4" stroke-width="2.4"/><rect x="1866.2" y="241" width="7.9" height="6.5" fill="none" stroke="#ececec" stroke-width="3"/><path d="M1890.6 237.8L1900.8 247.4M1900.8 237.8L1890.6 247.4" stroke="#f0f0f0" stroke-width="2.8"/><defs><linearGradient id="gz" x1="0" x2="1"><stop offset="0" stop-color="#4e78c4"/><stop offset="0.5" stop-color="#3d5fa0"/><stop offset="1" stop-color="#2c4678"/></linearGradient></defs><path d="M15.2 901.4L54 922.7" stroke="#3f9a45" stroke-width="7" stroke-linecap="round"/><path d="M15.6 900.1L54.4 921.2" stroke="#62c566" stroke-width="2.4" stroke-linecap="round"/><path d="M60.1 922.7L97 901.1" stroke="#9a4444" stroke-width="7" stroke-linecap="round"/><path d="M59.6 921.2L96.6 899.7" stroke="#b85c5c" stroke-width="2.4" stroke-linecap="round"/><rect x="53" y="872.5" width="7.1" height="53" rx="3" fill="url(#gz)"/><ellipse cx="55.6" cy="874.6" rx="1.8" ry="1.6" fill="#a8c4f4"/><path d="M54.4 854.6H68.8L54.4 869.4H69" fill="none" stroke="#1f6dff" stroke-width="1"/><path d="M9.2 878.6L16.5 886L24 878.6M16.5 886V893" fill="none" stroke="#25b02c" stroke-width="1"/><path d="M96.2 878L110.8 892.8M110.8 878L96.2 892.8" stroke="#d03030" stroke-width="1"/></svg>
<!-- p_cube -->
<svg style="left:0px;top:0px" width="1910" height="1020"><defs>
<linearGradient id="cl" x1="0" y1="0" x2="0" y2="1"><stop offset="0" stop-color="#b1b3b6"/><stop offset="1" stop-color="#8c8e93"/></linearGradient>
<linearGradient id="cr" x1="0" y1="0" x2="0" y2="1"><stop offset="0" stop-color="#b2b4b7"/><stop offset="1" stop-color="#898b90"/></linearGradient>
<linearGradient id="ct" x1="0" y1="0" x2="0" y2="1"><stop offset="0" stop-color="#a6a8ac"/><stop offset="1" stop-color="#b4b6b9"/></linearGradient>
<radialGradient id="gl" cx="0.5" cy="0.5" r="0.5"><stop offset="0" stop-color="#4a515c" stop-opacity="0.75"/><stop offset="1" stop-color="#20262e" stop-opacity="0"/></radialGradient>
</defs><path d="M1759.6 368.3A67.3 45 0 1 0 1894.2 368.3A67.3 45 0 1 0 1759.6 368.3ZM1774.4 368.3A52.5 32.5 0 1 1 1879.4 368.3A52.5 32.5 0 1 1 1774.4 368.3Z" fill="#454c57" fill-rule="evenodd"/><ellipse cx="1826.9" cy="368.3" rx="52.5" ry="32.5" fill="#1f252c"/><ellipse cx="1826.9" cy="372" rx="44" ry="24" fill="url(#gl)"/><g font-family="Liberation Sans, sans-serif" font-weight="bold" fill="#a7aab0" stroke="#a7aab0" stroke-width="0.7" text-anchor="middle"><text x="0" y="0" font-size="22" transform="translate(1781 400) rotate(-27) scale(1.25 0.8)">W</text><text x="0" y="0" font-size="22" transform="translate(1874.5 400.5) rotate(22) scale(1.2 0.82)">S</text><text x="0" y="0" font-size="17" transform="translate(1786 346) rotate(28) scale(1.1 0.75)">N</text><text x="0" y="0" font-size="17" transform="translate(1867.5 344.5) rotate(-24) scale(1.1 0.75)">E</text></g><path d="M1826.7 301.3L1864.5 320L1826.7 339.2L1789.7 320Z" fill="url(#ct)"/><path d="M1789.7 320L1826.7 339.2V383.7L1792.5 360.8Z" fill="url(#cl)"/><path d="M1864.5 320L1826.7 339.2V383.7L1861.7 360.8Z" fill="url(#cr)"/><path d="M1789.7 320L1826.7 339.2L1864.5 320M1826.7 339.2V383.7" fill="none" stroke="#6c6f75" stroke-width="0.8"/><path d="M1826.7 333L1833.5 336.6V343.5L1826.7 347.5L1820 343.5V336.6Z" fill="#9aa4b8" opacity="0.55"/><g font-family="Liberation Sans, sans-serif" font-weight="bold" fill="#555963" stroke="#555963" stroke-width="0.35" text-anchor="middle" font-size="10"><text transform="matrix(0.82 -0.46 0.78 0.42 1826.5 321.5)" x="0" y="3">TOP</text><text transform="matrix(0.84 0.46 0 1.05 1809 352)" x="0" y="3">LEFT</text><text transform="matrix(0.84 -0.5 0 1.05 1845.5 351.5)" x="0" y="3">FRONT</text></g><rect x="1798.6" y="433.3" width="56.2" height="19.8" rx="4.5" fill="#9193a2" stroke="#a9abb8" stroke-width="1"/><path d="M1840.4 440.3H1850L1845.2 446Z" fill="#a2a5b4" stroke="#74778a" stroke-width="0.8"/></svg>
<span class="t" style="left:1803.30px;top:437.00px;font-size:13px;color:#6b6e7e;letter-spacing:0.000px;text-rendering:geometricPrecision;transform-origin:0.00px 0;transform:scaleX(0.9613);">WCS</span>
<!-- p_status -->
<svg style="left:0px;top:0px" width="400" height="1020"><path d="M28 980H101.7L89.8 1010H16Z" fill="#3b4453"/><path d="M200.6 1004.8L208 985.5M250.5 1004.8L258 985.5" stroke="#4b5361" stroke-width="1.1"/><path d="M221.6 995.5H236.6M229.1 988V1003" stroke="#f4f4f4" stroke-width="2.1"/></svg>
<span class="t" style="left:37.70px;top:989.00px;font-size:16px;color:#ffffff;letter-spacing:0.000px;font-weight:bold;text-rendering:geometricPrecision;transform-origin:0.00px 0;transform:scaleX(0.9362);">Model</span>
<span class="t" style="left:111.40px;top:989.00px;font-size:16px;color:#f0f0f0;letter-spacing:0.000px;text-rendering:geometricPrecision;transform-origin:0.00px 0;transform:scaleX(0.9172);">A4_aobaixo</span>
<div class="a" style="left:778px;top:982px;width:59px;height:30px;background:#3b4453;"></div>
<div class="a" style="left:840px;top:982px;width:80px;height:30px;background:#3b4453;"></div>
<div class="a" style="left:923px;top:982px;width:30px;height:30px;background:#3b4453;"></div>
<div class="a" style="left:954.4px;top:982px;width:79.6px;height:30px;background:#3b4453;"></div>
<div class="a" style="left:1035px;top:982px;width:30.6px;height:30px;background:#3b4453;"></div>
<div class="a" style="left:1094.6px;top:982px;width:20.4px;height:30px;background:#3b4453;"></div>
<div class="a" style="left:1116px;top:982px;width:30.2px;height:30px;background:#3b4453;"></div>
<div class="a" style="left:1147px;top:982px;width:30px;height:30px;background:#3b4453;"></div>
<div class="a" style="left:1209px;top:982px;width:115px;height:30px;background:#3b4453;"></div>
<div class="a" style="left:1327px;top:982px;width:50px;height:30px;background:#3b4453;"></div>
<div class="a" style="left:1378.2px;top:982px;width:29.8px;height:30px;background:#3b4453;"></div>
<div class="a" style="left:1411px;top:982px;width:82px;height:30px;background:#3b4453;"></div>
<div class="a" style="left:1494px;top:982px;width:88px;height:30px;background:#3b4453;"></div>
<div class="a" style="left:1585px;top:982px;width:92.3px;height:30px;background:#3b4453;"></div>
<div class="a" style="left:1680px;top:982px;width:30px;height:30px;background:#3b4453;"></div>
<div class="a" style="left:1713px;top:982px;width:136px;height:30px;background:#3b4453;"></div>
<div class="a" style="left:1852px;top:982px;width:58px;height:30px;background:#3b4453;"></div>
<div class="a" style="left:1066px;top:982.6px;width:28px;height:28.4px;background:#5f8fc6;"></div>
<div class="a" style="left:1180.4px;top:982.6px;width:28.6px;height:28.4px;background:#5f8fc6;"></div>
<div class="a" style="left:1718px;top:982.6px;width:28.3px;height:28.4px;background:#5f8fc6;"></div>
<div class="a" style="left:1751.8px;top:982.6px;width:28.2px;height:28.4px;background:#5f8fc6;"></div>
<span class="t" style="left:782.90px;top:991.00px;font-size:16px;color:#f2f2f2;letter-spacing:0.000px;text-rendering:geometricPrecision;transform-origin:0.00px 0;transform:scaleX(0.8756);">MODEL</span>
<svg style="left:0px;top:0px" width="1910" height="1020"><path d="M849.4 987V1006M854.4 987V1006M859.4 987V1006M844.8 991.5H864.2M844.8 996.5H864.2M844.8 1001.5H864.2" stroke="#e4e4e4" stroke-width="1"/><g fill="#dcdcdc"><rect x="877.2" y="989.6" width="2.8" height="2.8"/><rect x="883.3" y="989.6" width="2.8" height="2.8"/><rect x="889.4" y="989.6" width="2.8" height="2.8"/><rect x="877.2" y="995.5" width="2.8" height="2.8"/><rect x="883.3" y="995.5" width="2.8" height="2.8"/><rect x="889.4" y="995.5" width="2.8" height="2.8"/><rect x="877.2" y="1001.4" width="2.8" height="2.8"/><rect x="883.3" y="1001.4" width="2.8" height="2.8"/><rect x="889.4" y="1001.4" width="2.8" height="2.8"/></g><path d="M904.8 994H915L909.9 999.1Z" fill="#d8d8d8"/><path d="M928 993.9H937M932.5 989.4V998.4" stroke="#dcdcdc" stroke-width="1"/><rect x="935.2" y="999.1" width="12.9" height="5.3" fill="#dcdcdc"/><rect x="936" y="999.9" width="2" height="3.7" fill="#3b4453"/><path d="M959.2 986.9V1006.4H978.9M959.2 1000.4H965.2V1006.4" fill="none" stroke="#d4d4d4" stroke-width="1"/><circle cx="997" cy="997.3" r="8" fill="none" stroke="#d4d4d4" stroke-width="1"/><path d="M997 997.3L1005.8 988.6M997 997.3H1008.8" stroke="#d4d4d4" stroke-width="1"/><path d="M1018.7 994H1029L1023.85 999.1Z" fill="#d8d8d8"/><path d="M1040.2 1004H1059.8M1040.2 1004L1055.1 989.8" stroke="#d4d4d4" stroke-width="1.1"/><rect x="1046.2" y="995" width="3" height="3" fill="#e4e4e4"/><rect x="1072.7" y="989.8" width="17" height="16.4" fill="none" stroke="#ffffff" stroke-width="1.1"/><rect x="1070" y="987.3" width="5.5" height="5.2" fill="#5f8fc6" stroke="#ffffff" stroke-width="1"/><path d="M1100.2 994H1110.1L1105.15 999.1Z" fill="#d8d8d8"/><rect x="1121" y="989" width="20" height="1.4" fill="#dcdcdc"/><rect x="1121" y="993.6" width="20" height="1" fill="#dcdcdc"/><rect x="1121" y="993.2" width="11" height="2.6" fill="#dcdcdc"/><rect x="1121" y="999.8" width="20" height="1" fill="#dcdcdc"/><rect x="1121" y="999" width="11" height="4.4" fill="#dcdcdc"/><path d="M1150.4 989.8H1158.6M1154.5 985.8V993.8" stroke="#dcdcdc" stroke-width="1"/><path d="M1157.2 1003V992H1168.6" fill="none" stroke="#dcdcdc" stroke-width="1"/><rect x="1159.1" y="994.1" width="13" height="12.9" fill="#7fd69f"/><path d="M1193.5 986.9L1197 995.7L1195.7 998.2L1198.6 999.7L1202.4 1007L1193.5 1002.4L1184.8 1007L1188.6 999.7L1191.3 998.2L1190 995.7Z" fill="#ffffff"/><circle cx="1201.1" cy="991.4" r="3.3" fill="none" stroke="#ffffff" stroke-width="1.2"/><path d="M1223.4 986.9L1226.9 995.7L1225.6 998.2L1228.5 999.7L1232.3 1007L1223.4 1002.4L1214.7 1007L1218.5 999.7L1221.2 998.2L1219.9 995.7Z" fill="#dadada"/><path d="M1232.6 987.1L1227.7 992.4H1230.6L1228.6 996.6L1233.9 991.2H1231L1232.8 987.4Z" fill="#dadada"/><path d="M1254.4 986.9L1257.9 995.7L1256.6 998.2L1259.5 999.7L1263.3 1007L1254.4 1002.4L1245.7 1007L1249.5 999.7L1252.2 998.2L1250.9 995.7Z" fill="#dadada"/><path d="M1308.8 994H1319L1313.9 999.1Z" fill="#d8d8d8"/><g fill="#d8d8d8"><rect x="1339.7" y="986.8" width="4.6" height="5" transform="rotate(0 1342 997)"/><rect x="1339.7" y="986.8" width="4.6" height="5" transform="rotate(45 1342 997)"/><rect x="1339.7" y="986.8" width="4.6" height="5" transform="rotate(90 1342 997)"/><rect x="1339.7" y="986.8" width="4.6" height="5" transform="rotate(135 1342 997)"/><rect x="1339.7" y="986.8" width="4.6" height="5" transform="rotate(180 1342 997)"/><rect x="1339.7" y="986.8" width="4.6" height="5" transform="rotate(225 1342 997)"/><rect x="1339.7" y="986.8" width="4.6" height="5" transform="rotate(270 1342 997)"/><rect x="1339.7" y="986.8" width="4.6" height="5" transform="rotate(315 1342 997)"/><circle cx="1342" cy="997" r="7.4"/></g><circle cx="1342" cy="997" r="3.2" fill="#3b4453"/><path d="M1362.1 994H1371.8L1366.95 999.1Z" fill="#d8d8d8"/><path d="M1383.1 996.6H1402M1392.6 987.3V1005.8" stroke="#e4e4e4" stroke-width="2.4"/><path d="M1478.2 994H1488L1483.1 999.1Z" fill="#d8d8d8"/><path d="M1501 992.6V989.6Q1501 987.4 1503 987.4H1515Q1517 987.4 1517 989.6V992.6" fill="none" stroke="#b8b8b8" stroke-width="0.9" stroke-dasharray="2 1.2"/><path d="M1499.4 996.6L1509 992L1518.7 996.6L1509 1001.4Z" fill="#4aa3e8"/><path d="M1500.6 999V1002.4L1509 1006.4L1517.6 1002.4V999L1509 1003Z" fill="#e8e8e8"/><path d="M1597 992L1603.4 988.4L1609.4 992V1001.4L1603.4 1005.4L1597 1001.4ZM1597 992L1603.4 995.6L1609.4 992M1603.4 995.6V1005.4" fill="none" stroke="#c8c8c8" stroke-width="0.9"/><rect x="1591.4" y="999.6" width="5" height="5" fill="none" stroke="#e09a5a" stroke-width="1.1"/><path d="M1591.6 987.6H1595.2L1591.6 992.4H1595.4" fill="none" stroke="#c8c8c8" stroke-width="0.8"/><path d="M1594 993.6V999" stroke="#c8c8c8" stroke-width="0.8"/><rect x="1685.4" y="987.6" width="7.4" height="7.2" fill="none" stroke="#d4d4d4" stroke-width="1"/><circle cx="1700.6" cy="995.6" r="4.2" fill="none" stroke="#d4d4d4" stroke-width="1"/><path d="M1692.8 999.4L1697.4 1006.2H1688.2Z" fill="none" stroke="#d4d4d4" stroke-width="1"/><rect x="1723.6" y="991.4" width="13" height="13" fill="#8fb4dc" stroke="#ffffff" stroke-width="1"/><path d="M1723.6 991.4L1727.4 988.2H1740.2L1736.6 991.4M1740.2 988.2V1001L1736.6 1004.4" fill="none" stroke="#ffffff" stroke-width="1"/><path d="M1724 996L1728 992M1724 1000L1732 992M1724.4 1003.8L1736 992.2M1728.4 1004L1736.2 996.2M1732.4 1004L1736.2 1000.2" stroke="#ffffff" stroke-width="0.8"/><path d="M1757 995.8L1762 990.4H1776.4L1771.4 995.8Z" fill="#ffffff"/><path d="M1757 1003.4L1762 998H1776.4L1771.4 1003.4Z" fill="#ffffff"/><path d="M1764.8 1000.2V994.6Q1764.8 992.8 1766.6 992.8Q1768.4 992.8 1768.4 994.6V998" fill="none" stroke="#5f8fc6" stroke-width="1.1"/><path d="M1785.4 986.6H1801L1805.4 991V1002H1785.4Z" fill="#2f66a8"/><path d="M1785.4 986.6H1801L1805.4 991H1785.4Z" fill="#4a8ad0"/><path d="M1791 984V1000M1785.4 990.6H1800" stroke="#f0f0f0" stroke-width="1"/><circle cx="1791" cy="990.6" r="1.8" fill="#ffffff"/><rect x="1785.4" y="998.6" width="9.6" height="6.6" fill="#f0b429"/><path d="M1796.4 1002.2L1800 1006L1808.4 998" fill="none" stroke="#3fb34f" stroke-width="2.4"/><rect x="1818.9" y="987" width="19" height="15.8" fill="#c8c8c8"/><path d="M1820 999Q1824 985 1828.4 997L1830.4 1001Q1834 991 1837 992" fill="none" stroke="#555" stroke-width="0.9"/><rect x="1824.2" y="989.6" width="2" height="2" fill="#6ebff7"/><path d="M1833.6 998L1838.6 1007.4H1828.6Z" fill="#f0a070"/><path d="M1833.6 1001V1004.4M1833.6 1005.2V1006.2" stroke="#fff" stroke-width="1"/><rect x="1857.9" y="989.9" width="18.6" height="13.8" fill="none" stroke="#d4d4d4" stroke-width="1"/><path d="M1868 996L1873 991.6M1870 991.4H1873.4V994.6M1866 997.6L1861 1002M1860.6 998.8V1002.2H1864" fill="none" stroke="#d4d4d4" stroke-width="1.1"/><path d="M1887.2 989.4H1906.8M1887.2 996.7H1906.8M1887.2 1004H1906.8" stroke="#e4e4e4" stroke-width="2.4"/></svg>
<span class="t" style="left:1276.10px;top:991.00px;font-size:16px;color:#f2f2f2;letter-spacing:0.000px;text-rendering:geometricPrecision;transform-origin:0.00px 0;transform:scaleX(0.7000);">1:1_1</span>
<span class="t" style="left:1411.90px;top:991.00px;font-size:16px;color:#f2f2f2;letter-spacing:0.000px;text-rendering:geometricPrecision;transform-origin:0.00px 0;transform:scaleX(0.9292);">Standard</span>
<span class="t" style="left:1532.30px;top:991.00px;font-size:16px;color:#f2f2f2;letter-spacing:0.000px;text-rendering:geometricPrecision;transform-origin:0.00px 0;transform:scaleX(0.8449);">1.0668</span>
<span class="t" style="left:1620.20px;top:991.00px;font-size:16px;color:#f2f2f2;letter-spacing:0.000px;text-rendering:geometricPrecision;transform-origin:0.00px 0;transform:scaleX(0.9030);">+0.0000</span>
</body></html>
